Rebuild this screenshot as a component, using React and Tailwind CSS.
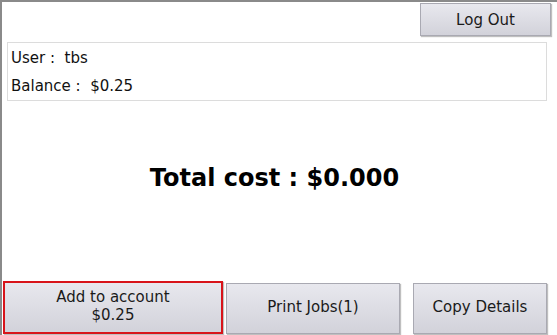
import React from "react";

const btn =
  "flex flex-col items-center justify-center text-[15px] leading-[18px] text-[#1a1a1a] bg-gradient-to-b from-[#e8e8ee] to-[#d2d2da] border border-[#a9a9b2] shadow-[1px_1px_1px_rgba(0,0,0,0.25)]";

export default function App() {
  return (
    <div
      className="w-[557px] h-[335px] bg-white border-l-2 border-t-2 border-[#8a8a8a] flex flex-col overflow-hidden"
      style={{ fontFamily: '"DejaVu Sans", sans-serif' }}
    >
      {/* top bar */}
      <div className="flex justify-end pr-[6px] pt-[1px]">
        <button className={`${btn} w-[131px] h-[33px]`}>Log Out</button>
      </div>

      {/* user info */}
      <div className="ml-[5px] mr-[10px] mt-[6px] h-[59px] border border-[#dcdcdc] pl-[3px] text-[15px] text-[#111] flex flex-col justify-center gap-[10px]">
        <p className="leading-[18px]">User :&nbsp; tbs</p>
        <p className="leading-[18px]">Balance :&nbsp; $0.25</p>
      </div>

      {/* total */}
      <div className="flex-1 flex items-center justify-center pb-[26px] pr-[10px]">
        <p className="text-[24px] font-bold text-black">Total cost : $0.000</p>
      </div>

      {/* bottom buttons */}
      <div className="flex items-end gap-[3px] pl-[1px] pr-[10px] pb-[1px]">
        <button className={`${btn} w-[220px] h-[53px] !border-2 !border-[#d8141a] pb-[4px]`}>
          <span>Add to account</span>
          <span>$0.25</span>
        </button>
        <button className={`${btn} w-[174px] h-[51px] pb-[4px]`}>Print Jobs(1)</button>
        <div className="w-[7px]" />
        <button className={`${btn} w-[134px] h-[51px] pb-[4px]`}>Copy Details</button>
      </div>
    </div>
  );
}
